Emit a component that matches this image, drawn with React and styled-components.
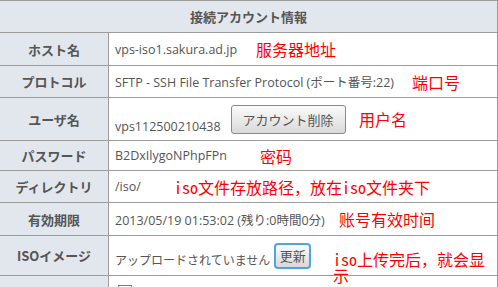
import React from 'react'
import styled, { createGlobalStyle } from 'styled-components'

const GlobalStyle = createGlobalStyle`
  html, body {
    margin: 0;
    padding: 0;
    background: #ffffff;
  }
  body {
    font-family: "Noto Sans CJK JP", sans-serif;
    color: #555555;
  }
`

const Table = styled.div`
  width: 498px;
  border-top: 1px solid #9c9c9c;
  border-right: 1px solid #9c9c9c;
  box-sizing: border-box;
  display: flex;
  flex-direction: column;
`

const Row = styled.div`
  position: relative;
  display: flex;
  height: ${p => p.$h}px;
  border-bottom: 1px solid #9c9c9c;
`

const Caption = styled.div`
  flex: 1;
  display: flex;
  align-items: center;
  justify-content: center;
  background: #e2e7ed;
  font-size: 13px;
  font-weight: bold;
  color: #555555;
`

const Label = styled.div`
  width: 108px;
  flex: none;
  display: flex;
  align-items: center;
  justify-content: center;
  background: #e2e7ed;
  border-right: 1px solid #9c9c9c;
  font-size: 13px;
  font-weight: bold;
  color: #555555;
`

const Cell = styled.div`
  flex: 1;
  display: flex;
  align-items: center;
  padding-left: 6px;
  font-family: "Open Sans", "Noto Sans CJK JP", sans-serif;
  font-size: 12.5px;
  color: #555555;
  white-space: nowrap;
`

const Value = styled.span`
  margin-top: ${p => p.$drop || 0}px;
  font-size: ${p => p.$size || 12.5}px;
`

const Button = styled.button`
  font-family: "Noto Sans CJK JP", sans-serif;
  font-size: 13px;
  color: #555555;
  padding: 0;
  height: ${p => p.$h}px;
  width: ${p => p.$w}px;
  margin-left: ${p => p.$gap}px;
  border: ${p => (p.$focus ? '2px solid #4ea6de' : '1px solid #8a8a8a')};
  border-radius: ${p => (p.$focus ? 4 : 3)}px;
  background: linear-gradient(#fbfbfb, #d9d9d9);
  box-sizing: border-box;
`

const Check = styled.span`
  display: inline-block;
  width: 12px;
  height: 12px;
  margin-left: 3px;
  margin-top: 1px;
  border: 1px solid #777777;
  background: #ffffff;
`

const Note = styled.div`
  position: absolute;
  left: ${p => p.$x}px;
  top: ${p => (p.$top != null ? `${p.$top}px` : '0')};
  bottom: ${p => (p.$top != null ? 'auto' : '0')};
  width: ${p => (p.$w ? `${p.$w}px` : 'auto')};
  display: flex;
  align-items: center;
  font-family: "Noto Sans Mono CJK SC", "Noto Sans CJK SC", monospace;
  font-size: 16px;
  line-height: 16px;
  color: #ff0000;
  white-space: ${p => (p.$w ? 'normal' : 'nowrap')};
  word-break: break-all;
`

export default function App() {
  return (
    <>
      <GlobalStyle />
      <Table>
        <Row $h={31}>
          <Caption>接続アカウント情報</Caption>
        </Row>
        <Row $h={32}>
          <Label>ホスト名</Label>
          <Cell>vps-iso1.sakura.ad.jp</Cell>
          <Note $x={256}>服务器地址</Note>
        </Row>
        <Row $h={31}>
          <Label>プロトコル</Label>
          <Cell>SFTP - SSH File Transfer Protocol (ポート番号:22)</Cell>
          <Note $x={412}>端口号</Note>
        </Row>
        <Row $h={42}>
          <Label>ユーザ名</Label>
          <Cell>
            <Value $drop={14}>vps112500210438</Value>
            <Button $w={115} $h={29} $gap={10}>アカウント削除</Button>
          </Cell>
          <Note $x={359}>用户名</Note>
        </Row>
        <Row $h={29}>
          <Label>パスワード</Label>
          <Cell>B2DxIlygoNPhpFPn</Cell>
          <Note $x={260} $top={7}>密码</Note>
        </Row>
        <Row $h={31}>
          <Label>ディレクトリ</Label>
          <Cell>/iso/</Cell>
          <Note $x={174}>iso文件存放路径，放在iso文件夹下</Note>
        </Row>
        <Row $h={32}>
          <Label>有効期限</Label>
          <Cell>2013/05/19 01:53:02 (残り:0時間0分)</Cell>
          <Note $x={339}>账号有效时间</Note>
        </Row>
        <Row $h={39}>
          <Label>ISOイメージ</Label>
          <Cell>
            <Value $drop={8} $size={12}>アップロードされていません</Value>
            <Button $w={37} $h={26} $gap={4} $focus>更新</Button>
          </Cell>
          <Note $x={333} $top={15} $w={165}>iso上传完后，就会显示</Note>
        </Row>
        <Row $h={30}>
          <Label />
          <Cell>
            <Check />
          </Cell>
        </Row>
      </Table>
    </>
  )
}
